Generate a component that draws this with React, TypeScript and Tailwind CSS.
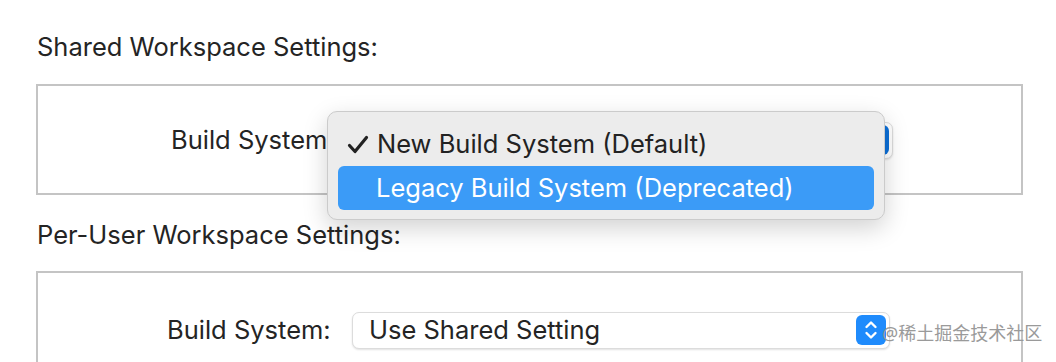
import React from "react";

const font = { fontFamily: "Inter, 'Noto Sans', sans-serif" };

const Stepper = ({ dark }: { dark?: boolean }) => (
  <div
    className={`w-[30px] h-[30px] rounded-[6px] flex items-center justify-center ${
      dark ? "bg-[#0b6fd8]" : "bg-[#1f8bfc]"
    }`}
  >
    <svg width="14" height="22" viewBox="0 0 14 22" fill="none">
      <path d="M2.5 8 L7 3.5 L11.5 8" stroke="white" strokeWidth="2.4" strokeLinecap="round" strokeLinejoin="round" />
      <path d="M2.5 14 L7 18.5 L11.5 14" stroke="white" strokeWidth="2.4" strokeLinecap="round" strokeLinejoin="round" />
    </svg>
  </div>
);

const Select = ({ text, dark }: { text?: string; dark?: boolean }) => (
  <div className="w-[538px] h-[37px] bg-white rounded-[7px] border border-[#dcdcdc] shadow-[0_1px_2px_rgba(0,0,0,0.12)] flex items-center justify-between pl-[16px] pr-[3px]">
    <span className="text-[25.5px] text-[#242424]">{text}</span>
    <Stepper dark={dark} />
  </div>
);

const App = () => {
  return (
    <div className="w-[1056px] h-[362px] overflow-hidden bg-white relative pl-[36px] text-[#242424]" style={font}>
      <div className="pt-[31px] text-[25.5px] leading-[31px] pl-[1px]">Shared Workspace Settings:</div>

      <div className="mt-[22px] w-[987px] h-[111px] border-2 border-[#c4c4c4]">
        <div className="flex items-center pt-[35px] pl-[133px]">
          <span className="text-[25.5px] w-[163px] whitespace-nowrap">Build System:</span>
          <div className="ml-[21px]">
            <Select dark />
          </div>
        </div>
      </div>

      <div className="mt-[24px] text-[25.5px] leading-[31px] pl-[1px]">Per-User Workspace Settings:</div>

      <div className="mt-[21px] w-[987px] h-[120px] border-2 border-[#c4c4c4]">
        <div className="flex items-center pt-[38px] pl-[129px]">
          <span className="text-[25.5px] w-[163px] whitespace-nowrap">Build System:</span>
          <div className="ml-[22px]">
            <Select text="Use Shared Setting" />
          </div>
        </div>
      </div>

      {/* popup menu */}
      <div className="absolute left-[327px] top-[111px] w-[558px] h-[109px] rounded-[10px] bg-[#ececec] border border-[#cbcbcb] shadow-[0_8px_24px_rgba(0,0,0,0.18)] px-[10px] py-[10px]">
        <div className="h-[44px] flex items-center pl-[9px] text-[25.5px] text-[#222]">
          <svg width="22" height="19" viewBox="0 0 22 19" fill="none" className="mr-[8px]">
            <path d="M2.5 10.5 L8 16.5 L19.5 2.5" stroke="#222" strokeWidth="3.2" strokeLinecap="round" strokeLinejoin="round" />
          </svg>
          New Build System (Default)
        </div>
        <div className="h-[44px] flex items-center pl-[38px] rounded-[6px] bg-[#3b9bf7] text-[25.5px] text-white">
          Legacy Build System (Deprecated)
        </div>
      </div>

      {/* watermark */}
      <div
        className="absolute left-[882px] top-[320px] text-[18px] leading-[26px] text-[#9a9a9a]"
        style={{ fontFamily: "'Noto Sans', 'Noto Sans CJK SC', sans-serif" }}
      >
        @稀土掘金技术社区
      </div>
    </div>
  );
};

export default App;
